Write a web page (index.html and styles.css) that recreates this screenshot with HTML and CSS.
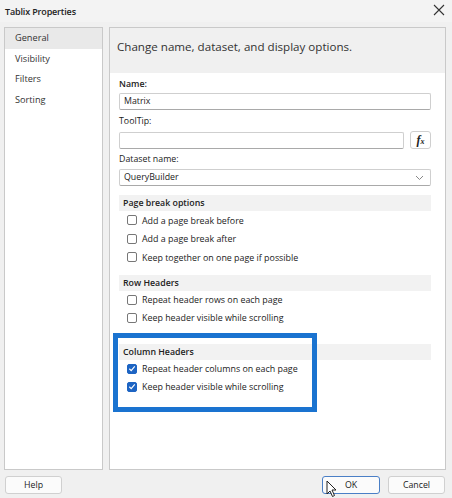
FILE: index.html
```html
<!DOCTYPE html>
<html>
<head>
<meta charset="utf-8">
<link rel="stylesheet" href="styles.css">
</head>
<body>
<div class="dialog">
  <div class="titlebar">
    <span class="title">Tablix Properties</span>
    <svg class="close" width="12" height="12" viewBox="0 0 12 12"><path d="M1 1L11 11M11 1L1 11" stroke="#333" stroke-width="1.1"/></svg>
  </div>
  <div class="main">
    <div class="nav">
      <div class="nav-item selected">General</div>
      <div class="nav-item">Visibility</div>
      <div class="nav-item">Filters</div>
      <div class="nav-item">Sorting</div>
    </div>
    <div class="panel">
      <div class="panel-head">Change name, dataset, and display options.</div>
      <div class="panel-body">
        <div class="label first bold">Name:</div>
        <div class="input">Matrix</div>
        <div class="label l2">ToolTip:</div>
        <div class="row">
          <div class="input grow"></div>
          <div class="fx"><i>f</i><span>x</span></div>
        </div>
        <div class="label l3">Dataset name:</div>
        <div class="input select">QueryBuilder
          <svg width="9" height="6" viewBox="0 0 9 6"><path d="M1 1L4.5 4.5L8 1" stroke="#888" fill="none" stroke-width="1"/></svg>
        </div>
        <div class="section">Page break options</div>
        <div class="check"><span class="box"></span>Add a page break before</div>
        <div class="check"><span class="box"></span>Add a page break after</div>
        <div class="check"><span class="box"></span>Keep together on one page if possible</div>
        <div class="section s2">Row Headers</div>
        <div class="check tight"><span class="box"></span>Repeat header rows on each page</div>
        <div class="check tight"><span class="box"></span>Keep header visible while scrolling</div>
        <div class="section s3">Column Headers</div>
        <div class="check tight"><span class="box on"><svg width="9" height="9" viewBox="0 0 9 9"><path d="M1.5 4.8L3.6 6.8L7.6 2.2" stroke="#fff" fill="none" stroke-width="1.3"/></svg></span>Repeat header columns on each page</div>
        <div class="check tight"><span class="box on"><svg width="9" height="9" viewBox="0 0 9 9"><path d="M1.5 4.8L3.6 6.8L7.6 2.2" stroke="#fff" fill="none" stroke-width="1.3"/></svg></span>Keep header visible while scrolling</div>
      </div>
      <div class="highlight"></div>
    </div>
  </div>
  <div class="footer">
    <div class="btn">Help</div>
    <div class="spacer"></div>
    <div class="btn ok">OK
      <svg class="cursor" width="12" height="18" viewBox="0 0 12 18"><path d="M1 1V14L4 11L6.5 16.5L8.5 15.5L6 10H10Z" fill="#fff" stroke="#222" stroke-width="1"/></svg>
    </div>
    <div class="btn">Cancel</div>
  </div>
</div>
</body>
</html>
```
FILE: styles.css
```css
* { box-sizing: border-box; }
html, body { margin: 0; padding: 0; }
body {
  width: 452px; height: 498px; overflow: hidden;
  background: #f0f0f0;
  font-family: "Open Sans", "Noto Sans", sans-serif;
  color: #1a1a1a;
}
.dialog { display: flex; flex-direction: column; height: 498px; }
.titlebar {
  height: 22px; display: flex; align-items: center; justify-content: space-between;
  padding: 0 7px 0 5px; background: #f3f3f3;
}
.title { font-size: 9px; font-weight: 600; color: #222; letter-spacing: -0.15px; }
.close { margin-top: -2px; }
.main { display: flex; gap: 6px; padding: 5px 6px 0 4px; height: 448px; }
.nav {
  width: 99px; background: #fff; border: 1px solid #c9c9c9;
}
.nav-item { height: 20.5px; line-height: 20px; padding-left: 10px; font-size: 9.2px; color: #333; }
.nav-item.selected { background: #e9e9e9; }
.panel { flex: 1; background: #fff; border: 1px solid #c9c9c9; position: relative; }
.panel-head {
  height: 45px; background: #f0f0f0; padding: 11px 0 0 7px;
  font-size: 11.6px; color: #333;
}
.panel-body { padding: 3px 14px 0 9px; }
.label { font-size: 8.8px; height: 17px; line-height: 17px; color: #222; }
.label.l2 { height: 22px; line-height: 22px; }
.label.l3 { height: 20px; line-height: 20px; }
.label.bold { font-weight: 600; }
.input {
  height: 17px; border: 1px solid #cfcfcf; border-bottom-color: #a9a9a9; border-radius: 2px;
  font-size: 8.8px; line-height: 15px; padding-left: 4px; color: #222;
}
.row { display: flex; gap: 6px; }
.grow { flex: 1; }
.fx {
  width: 21px; height: 18px; border: 1px solid #cfcfcf; border-radius: 3px; margin-top: -1px;
  display: flex; align-items: center; justify-content: center;
  font-family: "Liberation Serif", serif; font-weight: bold; color: #222;
}
.fx i { font-size: 12px; }
.fx span { font-size: 8px; margin-top: 3px; font-style: italic; }
.select { display: flex; justify-content: space-between; align-items: center; padding-right: 6px; }
.section {
  margin-top: 9px; height: 16px; line-height: 16px; background: #f2f2f2;
  font-size: 8.8px; font-weight: 600; padding-left: 4px; color: #222;
}
.s2 { margin-top: 8px; }
.s3 { margin-top: 17px; }
.check {
  height: 18.5px; display: flex; align-items: center; padding-left: 8px;
  font-size: 8.9px; color: #222;
}
.check.tight { height: 18px; }
.box {
  width: 10px; height: 10px; border: 1px solid #777; border-radius: 2px; margin-right: 5px;
  display: inline-flex; align-items: center; justify-content: center; flex: none;
}
.box.on { background: #1d64c3; border-color: #1d64c3; }
.highlight {
  position: absolute; left: 3px; top: 305px; width: 204px; height: 79px;
  border: 5px solid #1a73d0;
}
.footer { display: flex; align-items: center; padding: 6px 7px 0 5px; gap: 8px; }
.spacer { flex: 1; }
.btn {
  width: 57px; height: 18px; background: #fbfbfb; border: 1px solid #d0d0d0; border-radius: 3px;
  font-size: 8.8px; text-align: center; line-height: 16px; color: #222; position: relative;
}
.btn.ok { border: 1.5px solid #4a7fc6; width: 58px; }
.cursor { position: absolute; left: 3px; top: 3px; }
```
